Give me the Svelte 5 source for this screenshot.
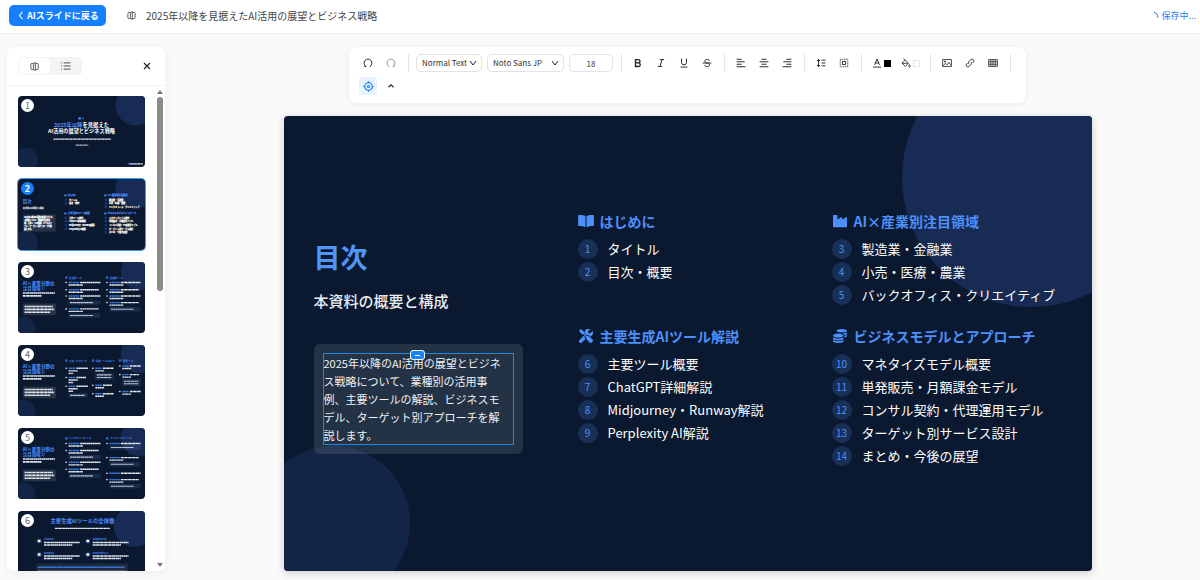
<script>
  const groups = [
    { title: 'はじめに', icon: 'book', items: [[1, 'タイトル'], [2, '目次・概要']] },
    { title: 'AI×産業別注目領域', icon: 'industry', items: [[3, '製造業・金融業'], [4, '小売・医療・農業'], [5, 'バックオフィス・クリエイティブ']] },
    { title: '主要生成AIツール解説', icon: 'tools', items: [[6, '主要ツール概要'], [7, 'ChatGPT詳細解説'], [8, 'Midjourney・Runway解説'], [9, 'Perplexity AI解説']] },
    { title: 'ビジネスモデルとアプローチ', icon: 'coins', items: [[10, 'マネタイズモデル概要'], [11, '単発販売・月額課金モデル'], [12, 'コンサル契約・代理運用モデル'], [13, 'ターゲット別サービス設計'], [14, 'まとめ・今後の展望']] }
  ];
  const summary = ['2025年以降のAI活用の展望とビジネ', 'ス戦略について、業種別の活用事', '例、主要ツールの解説、ビジネスモ', 'デル、ターゲット別アプローチを解', '説します。'];

  // Thumbnails are drawn in an 808 x 455 slide space.
  // Columns: x, heading, blocks of [y, lines, boxed note]
  const details = {
    3: { mark: '①', cols: [
      { x: 300, w: 225, head: '製造業 × AI', blocks: [[132, 2, 0], [178, 2, 0], [218, 2, 1], [300, 2, 1]] },
      { x: 560, w: 220, head: '金融業 × AI', blocks: [[132, 2, 0], [178, 2, 0], [218, 2, 0], [260, 2, 1]] }] },
    4: { mark: '②', cols: [
      { x: 300, w: 145, head: '小売・Eコマース', blocks: [[150, 3, 0], [208, 3, 0], [264, 3, 1]] },
      { x: 470, w: 140, head: '医療・ヘルスケア', blocks: [[150, 2, 2], [258, 2, 0], [312, 2, 0]] },
      { x: 642, w: 140, head: '農業 × AI', blocks: [[135, 2, 0], [190, 2, 2], [298, 2, 0]] }] },
    5: { mark: '③', cols: [
      { x: 300, w: 225, head: 'バックオフィス × AI', blocks: [[100, 2, 0], [145, 2, 1], [220, 2, 0], [264, 2, 1]] },
      { x: 560, w: 220, head: 'クリエイティブ × AI', blocks: [[100, 1, 1], [190, 2, 1], [290, 1, 0], [330, 2, 1]] }] }
  };
  const tools = [[125, 190, 'ChatGPT'], [435, 190, 'Midjourney'], [125, 276, 'Runway'], [435, 276, 'Perplexity AI']];
  const thumbs = [1, 2, 3, 4, 5, 6];
  let current = $state(2);
</script>

{#snippet slidesIcon()}
  <svg class="ic" viewBox="0 0 16 16" aria-hidden="true"><path d="M5.500 2.500H3.500Q1.500 2.500 1.500 4.500v7q0 2 2 2h2M10 2.500h2.500q2 0 2 2v7q0 2-2 2H10M6 2.500 9.500 1v14L6 13.500z" /></svg>
{/snippet}

{#snippet groupIcon(name)}
  {#if name === 'book'}
    <svg class="gi" viewBox="0 0 576 512" aria-hidden="true"><path d="M554 36c-60-8-170-4-238 36-6 4-9 8-9 14v372c0 12 10 18 20 13 70-32 160-36 225-30 13 1 24-8 24-22V62c0-14-9-24-22-26zM260 72C192 32 82 28 22 36 9 38 0 48 0 62v357c0 14 11 23 24 22 65-6 155-2 225 30 10 5 20-1 20-13V86c0-6-3-10-9-14z" /></svg>
  {:else if name === 'industry'}
    <svg class="gi" viewBox="0 0 512 512" aria-hidden="true"><path d="M475 115 336 204v-64c0-18-20-30-37-20L160 204V56c0-13-11-24-24-24H24C11 32 0 43 0 56v400c0 13 11 24 24 24h464c13 0 24-11 24-24V135c0-18-20-30-37-20z" /></svg>
  {:else if name === 'tools'}
    <svg class="gi" viewBox="0 0 512 512" aria-hidden="true"><path d="M502 395 384 278c-24-24-59-28-88-14L189 157V96L64 0 0 64l96 128h62l107 107c-14 28-9 64 14 88l118 117c14 15 38 15 53 0l52-52c14-15 14-38 0-57zM331 225c26 0 51 10 70 29l19 19c16-7 31-16 43-29 43-42 57-100 46-153-2-11-15-14-23-7l-74 74-68-11-11-68 74-74c7-8 4-21-7-23-53-13-112 2-154 44-32 32-47 75-46 117l90 89c13-5 27-7 41-7zM228 308l-57-57L19 403c-25 25-25 65 0 90s66 25 91 0l117-117c-9-22-10-46 1-68z" /></svg>
  {:else}
    <svg class="gi" viewBox="0 0 512 512" aria-hidden="true"><path d="M0 405v43c0 35 86 64 192 64s192-29 192-64v-43c-41 29-117 43-192 43S41 434 0 405zM320 128c106 0 192-29 192-64S426 0 320 0 128 29 128 64s86 64 192 64zM0 300v52c0 35 86 64 192 64s192-29 192-64v-52c-41 34-117 52-192 52S41 334 0 300zm416 11c57-11 96-32 96-55v-43c-23 16-57 28-96 35zM192 160C86 160 0 196 0 240s86 80 192 80 192-36 192-80-86-80-192-80zm219 56c61-11 101-32 101-56v-43c-35 25-97 39-161 42 29 15 51 33 60 57z" /></svg>
  {/if}
{/snippet}

{#snippet thumbArt(n)}
  <svg class="art" viewBox="0 0 808 455" preserveAspectRatio="xMidYMid slice" aria-hidden="true">
    <rect width="808" height="455" fill="#0a192f" />
    <circle cx={n === 1 || n === 2 ? 748 : n === 6 ? 740 : 774} cy={n === 6 ? 100 : 61} r={n === 6 ? 130 : n > 2 ? 120 : 128} fill="#182b55" />
    {#if n < 6}<circle cx={n > 2 ? 34 : 50} cy={n > 2 ? 425 : 407} r="77" fill="#122546" />{/if}
    {#if n === 1}
      <circle cx="392" cy="144" r="9" fill="#3b82f6" /><circle cx="414" cy="144" r="5" fill="#3b82f6" />
      <text x="404" y="200" text-anchor="middle" font-size="34" font-weight="700" fill="#fff"><tspan fill="#4d8fff">2025年以降</tspan>を見据えた</text>
      <text x="404" y="240" text-anchor="middle" font-size="33" font-weight="700" fill="#fff">AI活用の展望とビジネス戦略</text>
      <path class="ln" d="M226 276H592" stroke-width="9" /><path class="ln" d="M367 314h80" stroke-width="6" />
      <circle cx="702" cy="434" r="5" fill="#3b82f6" /><path class="ln" d="M710 434h84" stroke-width="8" />
    {:else if n === 2}
      <text x="31" y="154" font-size="28" font-weight="700" fill="#4d8fff">目次</text>
      <text x="31" y="192" font-size="15" font-weight="700" fill="#fff">本資料の概要と構成</text>
      <rect x="31" y="228" width="209" height="108" rx="7" fill="#fff" fill-opacity=".12" />
      {#each summary as line, i}<text x="40" y={252 + i * 18} font-size="11" font-weight="700" fill="#fff" stroke="#fff" stroke-width="1">{line}</text>{/each}
      {#each groups as g, i}
        {@const gx = i % 2 ? 549 : 295}
        {@const gy = i < 2 ? 111 : 226}
        <rect x={gx} y={gy - 11} width="13" height="12" fill="#4d8fff" />
        <text x={gx + 22} y={gy} font-size="14" font-weight="700" fill="#4d8fff" stroke="#4d8fff" stroke-width="1">{g.title}</text>
        {#each g.items as it, j}
          <circle cx={gx + 10} cy={gy + 23 + j * 23} r="9" fill="#1b3765" />
          <text x={gx + 30} y={gy + 28 + j * 23} font-size="13" font-weight="700" fill="#fff" stroke="#fff" stroke-width="1">{it[1]}</text>
        {/each}
      {/each}
    {:else if n < 6}
      {@const d = details[n]}
      <text x="31" y="146" font-size="29" font-weight="700" fill="#4d8fff">AI×産業分野の</text>
      <text x="31" y="179" font-size="28" font-weight="700" fill="#4d8fff">注目領域{d.mark}</text>
      <path class="ln" d="M31 199H235M31 217H150" stroke-width="10" />
      <rect x="31" y="266" width="210" height="74" rx="7" fill="#fff" fill-opacity=".12" />
      <path class="ln" d="M42 285H222M42 303H230M42 321H205" stroke-width="10" />
      {#each d.cols as c}
        {@const hy = n === 5 ? 74 : 107}
        <rect x={c.x} y={hy - 14} width="15" height="15" fill="#2f69c9" />
        <text x={c.x + 25} y={hy} font-size="15" font-weight="700" fill="#4d8fff">{c.head}</text>
        {#each c.blocks as [y, lines, note], k}
          <circle cx={c.x + 6} cy={y} r="5" fill="#fff" />
          <path d={`M${c.x + 22} ${y}h${c.w * 0.3}`} stroke="#3b7be8" stroke-width="9" stroke-dasharray="12 2" />
          <path class="ln" d={`M${c.x + 28 + c.w * 0.3} ${y}H${c.x + c.w - (k % 2) * 12}`} stroke-width="9" />
          {#if lines > 1}<path class="ln" d={`M${c.x + 22} ${y + 16}h${c.w * 0.4}`} stroke-width="9" />{/if}
          {#if lines > 2}<path class="ln" d={`M${c.x + 22} ${y + 32}h${c.w * 0.2}`} stroke-width="9" />{/if}
          {#if note}
            {@const ny = y + lines * 16 - 4}
            <rect x={c.x + 20} y={ny} width={c.w - 20} height={note * 16 + 12} rx="4" fill="#8ab4ff" fill-opacity=".13" />
            {#each Array(note) as _, q}<path class="ln" d={`M${c.x + 32} ${ny + 14 + q * 16}h${c.w * 0.65}`} stroke-width="7" opacity=".85" />{/each}
          {/if}
        {/each}
      {/each}
    {:else}
      <text x="410" y="77" text-anchor="middle" font-size="34" font-weight="700" fill="#4d8fff">主要生成AIツールの全体像</text>
      <path class="ln" d="M235 112H584" stroke-width="9" />
      {#each tools as [x, y, name]}
        <rect x={x - 8} y={y - 14} width="34" height="34" rx="17" fill="#1b3765" /><rect x={x + 1} y={y - 5} width="17" height="15" fill="#fff" />
        <text x={x + 40} y={y - 3} font-size="16" font-weight="700" fill="#4d8fff">{name}</text>
        <path class="ln" d={`M${x + 40} ${y + 12}h228M${x + 40} ${y + 28}h180`} stroke-width="10" />
      {/each}
      <rect x="115" y="335" width="585" height="90" rx="7" fill="#fff" fill-opacity=".08" />
      <path d="M126 360H680" stroke="#3b7be8" stroke-width="10" stroke-dasharray="13 2" />
      <path class="ln" d="M126 386H690M126 404H640" stroke-width="9" />
    {/if}
  </svg>
{/snippet}

<div class="app">
  <header>
    <a class="back" href="#slides">
      <svg viewBox="0 0 8 12" aria-hidden="true"><path d="M6 1 2 6l4 5" /></svg>AIスライドに戻る
    </a>
    {@render slidesIcon()}
    <h1>2025年以降を見据えたAI活用の展望とビジネス戦略</h1>
    <span class="saving" role="status"><svg viewBox="0 0 7 10" aria-hidden="true"><path d="M1 1q4 1 4 6" /></svg>保存中...</span>
  </header>

  <div class="work">
    <aside>
      <div class="side-head">
        <div class="toggle">
          <button class="on" aria-label="スライド表示">{@render slidesIcon()}</button>
          <button aria-label="リスト表示"><svg class="ic list" viewBox="0 0 16 16" aria-hidden="true"><path d="M1 3h1.500M5 3h11M1 8h1.500M5 8h11M1 13h1.500M5 13h11" /></svg></button>
        </div>
        <button class="close" aria-label="閉じる"><svg viewBox="0 0 8 8" aria-hidden="true"><path d="m1 1 6 6M7 1 1 7" /></svg></button>
      </div>
      <div class="side-body">
        <div class="thumbs">
          {#each thumbs as n}
            <button class="thumb" class:sel={current === n} onclick={() => (current = n)}>
              {@render thumbArt(n)}
              <span class="num">{n}</span>
            </button>
          {/each}
        </div>
        <div class="scroll" aria-hidden="true">
          <svg viewBox="0 0 6 4"><path d="M0 4 3 0l3 4z" /></svg>
          <div class="track"><div class="grip"></div></div>
          <svg viewBox="0 0 6 4"><path d="M0 0h6L3 4z" /></svg>
        </div>
      </div>
    </aside>

    <main>
      <div class="toolbar" role="toolbar" aria-label="書式">
        <button aria-label="元に戻す"><svg class="t" viewBox="0 0 16 16"><path d="M2 13.500h3A6.300 6.300 0 1 1 11 13.500h1" /></svg></button>
        <button class="dim" aria-label="やり直す"><svg class="t" viewBox="0 0 16 16"><path d="M14 13.500h-3A6.300 6.300 0 1 0 5 13.500H4" /></svg></button>
        <i class="div"></i>
        <label class="pick style"><select aria-label="段落スタイル"><option>Normal Text</option></select><svg viewBox="0 0 8 6"><path d="m1 1 3 4 3-4" /></svg></label>
        <label class="pick font"><select aria-label="フォント"><option>Noto Sans JP</option></select><svg viewBox="0 0 8 6"><path d="m1 1 3 4 3-4" /></svg></label>
        <input class="size" aria-label="文字サイズ" value="18" />
        <i class="div"></i>
        <button aria-label="太字"><svg class="t" viewBox="0 0 16 16"><path stroke-width="2.200" d="M4 2.500h4.500a2.600 2.600 0 0 1 0 5.300H4zM4 7.800h5.200a2.900 2.900 0 0 1 0 5.700H4z" /></svg></button>
        <button aria-label="斜体"><svg class="t" viewBox="0 0 16 16"><path d="M6 2.500h7M3 13.500h7M9.800 2.500l-3.600 11" /></svg></button>
        <button aria-label="下線"><svg class="t" viewBox="0 0 16 16"><path d="M4 1v6a4 4 0 0 0 8 0V1M2.500 14.500h11" /></svg></button>
        <button aria-label="取り消し線"><svg class="t" viewBox="0 0 16 16"><path d="M12 4.500C11 1.500 4.500 1.500 4.500 5c0 2 2 2.500 3.500 3s4 1 4 3c0 3.500-7 3.500-8 0M1 8h14" /></svg></button>
        <i class="div"></i>
        <button aria-label="左揃え"><svg class="t" viewBox="0 0 16 16"><path d="M1 2h8M1 6h13M1 10h8M1 14h14" /></svg></button>
        <button aria-label="中央揃え"><svg class="t" viewBox="0 0 16 16"><path d="M4 2h8M1 6h14M4 10h8M1 14h14" /></svg></button>
        <button aria-label="右揃え"><svg class="t" viewBox="0 0 16 16"><path d="M7 2h8M2 6h13M7 10h8M1 14h14" /></svg></button>
        <i class="div"></i>
        <button aria-label="行間"><svg class="t" viewBox="0 0 16 16"><path d="M4 2.500v11M1.500 5 4 2l2.500 3M1.500 11 4 14l2.500-3M9 3.500h6M9 8h6M9 12.500h6" /></svg></button>
        <button aria-label="余白"><svg class="t" viewBox="0 0 16 16"><path d="M5.500 5.500h5v5h-5z" /><path stroke-dasharray="2 1" stroke-width="1.200" d="M2 2h12v12H2z" /></svg></button>
        <i class="div"></i>
        <button class="wide" aria-label="文字色"><svg class="t" viewBox="0 0 16 16"><path d="m4 11 4-9.500L12 11M5.500 8h5M1.500 14.500h13" /></svg><b class="sw"></b></button>
        <button class="wide" aria-label="背景色"><svg class="t" viewBox="0 0 16 16"><path stroke-width="1.300" d="m4 1 8 7-5 5.500L1.500 8 7 3.500M2 8.500h9M13.500 10.500q2.500 4 0 4t0-4z" /></svg><b class="sw none"></b></button>
        <i class="div"></i>
        <button aria-label="画像"><svg class="t" viewBox="0 0 16 16"><path stroke-width="1.300" d="M1 2.500h14v11H1zM1.500 12.500l4-4 2.500 2.500 3-4 4 5M4 5h1.500v1.500H4z" /></svg></button>
        <button aria-label="リンク"><svg class="t" viewBox="0 0 16 16"><path d="M6.500 9.500c-1.500-1.500-1-3 0-4l2.700-2.800c3-2.500 6.500 1 4 4L12 8M9.500 6.500c1.500 1.500 1 3 0 4l-2.700 2.800c-3 2.500-6.500-1-4-4L4 8" /></svg></button>
        <button aria-label="表"><svg class="t" viewBox="0 0 16 16"><path stroke-width="1.200" d="M1 2.500h14v11H1zM1 6h14M1 10h14M4.500 2.500v11M8 2.500v11M11.500 2.500v11" /></svg></button>
        <i class="div"></i>
        <button class="active" aria-label="選択"><svg class="t big" viewBox="0 0 16 16"><path stroke-width="1.800" d="M8 2.500a5.500 5.500 0 1 1 0 11 5.500 5.500 0 0 1 0-11zM8 .500v2M8 13.500v2M.500 8h2M13.500 8h2" /><circle cx="8" cy="8" r="1.500" /></svg></button>
        <button aria-label="折りたたむ"><svg class="t" viewBox="0 0 16 16"><path stroke-width="1.800" d="m4 10 4-4 4 4" /></svg></button>
      </div>

      <section class="slide">
        <div class="left">
          <h2>目次</h2>
          <p class="sub">本資料の概要と構成</p>
          <div class="note">
            <p>{#each summary as line, i}{#if i}<br />{/if}{line}{/each}</p>
            <button class="handle" aria-label="折りたたむ"></button>
          </div>
        </div>
        <div class="groups">
          {#each groups as g}
            <section>
              <h3>{@render groupIcon(g.icon)}{g.title}</h3>
              <ol>
                {#each g.items as [n, label]}<li><span>{n}</span>{label}</li>{/each}
              </ol>
            </section>
          {/each}
        </div>
      </section>
    </main>
  </div>
</div>

<style>
  :global(body) { background: #fafafa; }
  .app, button, input, select { font-family: 'Noto Sans CJK JP', 'Noto Sans', sans-serif; }
  .app { display: flex; flex-direction: column; height: 100vh; overflow: hidden; color: #444; }
  * { box-sizing: border-box; }
  h1, h2, h3, p, ol { margin: 0; padding: 0; font-weight: 400; }
  button { border: 0; padding: 0; background: none; color: inherit; cursor: pointer; }
  svg { display: block; fill: none; stroke: currentColor; }
  header { display: flex; align-items: center; height: 34px; flex: none; padding: 0 4px 2px 9px; background: #fff; border-bottom: 1px solid #f2f2f2; }
  .back { display: flex; align-items: center; gap: 3px; height: 21px; margin-right: 21px; padding: 0 0 0 9px; width: 97px; border-radius: 5px; background: #167ffc; color: #fff; font-size: 9px; font-weight: 700; text-decoration: none; white-space: nowrap; }
  .back svg { width: 6px; height: 9px; stroke-width: 1.5; }
  .ic { width: 9px; height: 9px; stroke-width: 1.5; }
  .list { width: 11px; height: 10px; }
  h1 { margin-left: 10px; font-size: 10px; line-height: 16px; }
  .saving { display: flex; align-items: center; gap: 1px; margin-left: auto; color: #2b84f5; font-size: 9px; line-height: 14px; }
  .saving svg { width: 7px; height: 10px; }
  .work { display: flex; flex: 1; min-height: 0; gap: 10px; padding: 13px 0 9px 7px; }
  aside { display: flex; flex-direction: column; flex: none; width: 158px; background: #fff; border-radius: 7px; box-shadow: 0 2px 8px #0000000f; overflow: hidden; }
  .side-head { display: flex; align-items: center; justify-content: space-between; height: 39px; flex: none; padding: 0 13px 0 11px; border-bottom: 1px solid #f4f4f4; }
  .toggle { display: flex; padding: 1px; width: 64px; height: 18px; border-radius: 4px; background: #f4f4f4; }
  .toggle button { display: grid; place-items: center; flex: 1; border-radius: 3px; }
  .toggle .on { background: #fff; }
  .close { display: grid; place-items: center; width: 10px; height: 14px; color: #222; }
  .close svg { width: 8px; height: 8px; stroke-width: 1.2; }
  .side-body { display: flex; flex: 1; min-height: 0; justify-content: space-between; }
  .thumbs { display: flex; flex-direction: column; flex: 1; gap: 12px; padding: 10px 10px 0 11px; overflow: hidden; }
  .thumb { position: relative; flex: none; width: 100%; height: 71px; border-radius: 4px; }
  .art { width: 100%; height: 100%; border-radius: 4px; stroke: none; }
  .ln { stroke: #e8edf6; stroke-dasharray: 14 2 9 1; }
  .sel { box-shadow: 0 0 0 1px #3d9bff; }
  .num { position: absolute; left: 3px; top: 3px; width: 13px; height: 13px; border-radius: 50%; background: #fff; color: #666; font-size: 9px; line-height: 13px; font-weight: 400; text-align: center; }
  .sel .num { background: #167ffc; color: #fff; font-weight: 700; }
  .scroll { display: flex; flex-direction: column; align-items: center; flex: none; width: 10px; padding: 4px 0; }
  .scroll svg { width: 6px; height: 4px; fill: #777; stroke: none; }
  .track { flex: 1; padding: 3px 0; }
  .grip { width: 6px; height: 42%; border-radius: 3px; background: #8b8b8b; }

  main { display: flex; flex-direction: column; flex: 1; align-items: center; gap: 13px; min-width: 0; }
  .toolbar { display: flex; flex-wrap: wrap; align-items: center; gap: 5px; width: 100%; max-width: 677px; padding: 7px 10px 8px; border-radius: 8px; background: #fff; box-shadow: 0 1px 6px #00000012; color: #222; }
  .toolbar button { display: flex; align-items: center; justify-content: center; width: 18px; height: 18px; border-radius: 2px; }
  .toolbar .wide { width: 24px; gap: 2px; }
  .t { width: 10px; height: 10px; stroke-width: 1.5; flex: none; }
  .t.big { width: 11px; height: 11px; }
  .dim { opacity: .5; }
  .toolbar .active { background: #e8f3ff; color: #167ffc; }
  .div { width: 1px; height: 18px; margin: 0 2px 0 3px; background: #e6e6e6; }
  .pick { position: relative; height: 18px; }
  .pick.style { width: 66px; }
  .pick.font { width: 77px; }
  .pick select { width: 100%; height: 100%; padding: 0 4px 0 5px; appearance: none; }
  .pick svg { position: absolute; right: 5px; top: 6px; width: 8px; height: 6px; pointer-events: none; }
  .pick select, .size { display: block; border: 1px solid #e2e2e2; border-radius: 5px; background: #fff; color: #333; font-size: 8px; line-height: 14px; }
  .size { width: 44px; height: 18px; padding: 0; text-align: center; }
  .sw { width: 7px; height: 7px; flex: none; background: #000; }
  .sw.none { background: #fff; border: 1px solid #e6e6e6; }

  .slide { position: relative; display: flex; align-items: flex-start; gap: 55px; width: 100%; max-width: 808px; aspect-ratio: 16 / 9; padding: 93px 30px 0; border-radius: 4px; overflow: hidden; background: #0a192f; color: #fff; box-shadow: 0 2px 8px #00000030; }
  .slide::before, .slide::after { content: ''; position: absolute; border-radius: 50%; aspect-ratio: 1; }
  .slide::before { width: 32%; right: -69px; top: -68px; background: #182b55; }
  .slide::after { width: 19%; left: -27px; bottom: -29px; background: #122546; }
  .left, .groups { position: relative; z-index: 1; }
  .left { flex: none; width: 209px; padding-top: 28px; }
  h2 { color: #5096fa; font-size: 27px; line-height: 40px; font-weight: 700; }
  .sub { margin: 13px 0 32px; font-size: 15px; line-height: 22px; font-weight: 500; color: #e8ebf1; }
  .note { position: relative; padding: 9px; border-radius: 6px; background: #ffffff1c; }
  .note p { border: 1px solid #1e88e5; font-size: 11px; line-height: 18px; color: #f0f2f6; white-space: nowrap; }
  .handle { position: absolute; left: 50%; top: 6px; width: 15px; height: 10px; margin-left: -8px; border: 1px solid #fff; border-radius: 3px; background: linear-gradient(#fff, #fff) center / 5px 1px no-repeat #1684fa; }
  .groups { display: grid; flex: 1; min-width: 0; grid-template-columns: 1fr 1fr; gap: 19px 24px; }
  h3 { display: flex; align-items: center; gap: 6px; height: 24px; margin-bottom: 6px; color: #4d90fb; font-size: 14px; line-height: 24px; font-weight: 700; white-space: nowrap; }
  .gi { height: 14px; width: 16px; fill: currentColor; stroke: none; }
  ol { display: flex; flex-direction: column; gap: 3px; list-style: none; }
  li { display: flex; align-items: center; gap: 10px; height: 20px; font-size: 13px; line-height: 20px; font-weight: 400; white-space: nowrap; }
  li span { flex: none; width: 20px; height: 20px; border-radius: 50%; background: #182f56; color: #4d90fb; font-size: 10px; text-align: center; }
</style>
